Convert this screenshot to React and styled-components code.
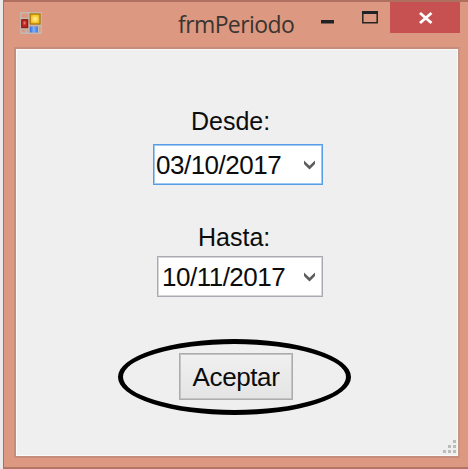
import React from "react";
import styled, { createGlobalStyle } from "styled-components";

const GlobalStyle = createGlobalStyle`
  * { box-sizing: border-box; }
  body { margin: 0; background: #ebe9e9; overflow: hidden; }
`;

const Window = styled.main`
  width: 465px;
  height: 469px;
  margin-left: 3px;
  padding: 0 8px 11px 11px;
  background: #dc9880;
  border-top: 2px solid #b0705f;
  border-left: 1px solid #a8705f;
  border-bottom: 2px solid #b27563;
  font-family: "Liberation Sans", Arial, sans-serif;
  color: #0c0c0c;
`;

const TitleBar = styled.header`
  height: 45px;
  display: flex;
  align-items: flex-start;
`;

const AppIcon = styled.svg`
  display: block;
  margin: 10px 0 0 5px;
`;

const Title = styled.h1`
  flex: 1;
  margin: 7px 0 0 136px;
  font: 400 23px/30px "Open Sans", "Noto Sans", sans-serif;
  letter-spacing: -0.6px;
  color: #3a3431;
  white-space: nowrap;
`;

const CaptionButtons = styled.div`
  display: flex;
`;

const CaptionButton = styled.button`
  width: ${(p) => p.$width}px;
  height: 31px;
  padding: 0;
  border: 0;
  background: ${(p) => (p.$danger ? "#c75050" : "transparent")};
  svg { display: block; }
`;

const Client = styled.section`
  width: 446px;
  height: 411px;
  margin-left: -1px;
  padding-top: 57px;
  border: 2px solid #c58d7c;
  border-right-color: #c79786;
  box-shadow: inset 1px 1px #fafafa, inset -1px -1px #fafafa;
  background: #efefef;
  position: relative;
`;

const Field = styled.div`
  width: ${(p) => p.$width}px;
  margin-left: ${(p) => p.$left}px;
  margin-bottom: ${(p) => p.$gap}px;
`;

const Label = styled.label`
  display: block;
  height: ${(p) => p.$height}px;
  padding-left: ${(p) => p.$indent}px;
  font-size: 25px;
  line-height: 30px;
`;

const DateBox = styled.div`
  height: 41px;
  display: flex;
  align-items: center;
  justify-content: space-between;
  padding: 0 6px 0 ${(p) => p.$pad}px;
  border: 1px solid ${(p) => (p.$focused ? "#569de5" : "#aaabb2")};
  box-shadow: inset 0 0 0 1px ${(p) => (p.$focused ? "#9fc9f2" : "#d4d5d9")};
  background: #fff;
  font-size: 26px;
  line-height: 30px;
  letter-spacing: -0.5px;
`;

const AcceptButton = styled.button`
  display: block;
  width: 114px;
  height: 47px;
  margin-left: 163px;
  padding: 1px 0 0;
  border: 1px solid #acacac;
  box-shadow: inset 0 0 0 1px #c4c4c4;
  background: linear-gradient(#f0f0f0, #e4e4e4);
  font: 26px/30px "Liberation Sans", Arial, sans-serif;
  letter-spacing: -0.4px;
  color: #0c0c0c;
`;

const Highlight = styled.div`
  position: absolute;
  left: 102px;
  top: 290px;
  width: 233px;
  height: 76px;
  border: 5px solid #000;
  border-radius: 50%;
  pointer-events: none;
`;

const Grip = styled.svg`
  position: absolute;
  right: 1px;
  bottom: 2px;
`;

const Chevron = () => (
  <svg width="13" height="12" viewBox="0 0 13 12">
    <path d="M1 1.5 L6.5 6.7 L12 1.5 V5 L6.5 10.5 L1 5Z" fill="#5c5c5c" />
  </svg>
);

const DateField = ({ label, value, width, left, gap, indent, labelHeight, pad, focused }) => (
  <Field $width={width} $left={left} $gap={gap}>
    <Label $indent={indent} $height={labelHeight}>{label}</Label>
    <DateBox $focused={focused} $pad={pad}>
      <span>{value}</span>
      <Chevron />
    </DateBox>
  </Field>
);

export default function App() {
  return (
    <>
      <GlobalStyle />
      <Window>
        <TitleBar>
          <AppIcon width="22" height="22" viewBox="0 0 22 22">
            <defs>
              <radialGradient id="gold"><stop stopColor="#fff3a0" /><stop offset="1" stopColor="#f3b90f" /></radialGradient>
              <linearGradient id="blue"><stop stopColor="#3269cf" /><stop offset=".5" stopColor="#7cb2fa" /><stop offset="1" stopColor="#3c72d8" /></linearGradient>
            </defs>
            <path d="M.8 .8H21.2V21.2H.8ZM.8 6.5H9M.8 16.7H9M6.2 17V21M9 1V21M18.5 13V21M9 13.3H21" fill="none" stroke="#c4b9b1" strokeWidth="1.4" />
            <rect x="1.7" y="7.7" width="6" height="8" fill="#b92720" stroke="#87150f" />
            <rect x="3.5" y="9.5" width="2" height="3" fill="#e77b6d" />
            <rect x="10.2" y="2" width="9.8" height="10" fill="url(#gold)" stroke="#a77b05" strokeWidth="1.2" />
            <rect x="9.8" y="14.5" width="8" height="6" fill="url(#blue)" />
          </AppIcon>
          <Title>frmPeriodo</Title>
          <CaptionButtons>
            <CaptionButton $width={40} aria-label="Minimizar">
              <svg width="40" height="31"><rect x="10" y="18" width="13" height="3.5" fill="#202326" /></svg>
            </CaptionButton>
            <CaptionButton $width={39} aria-label="Maximizar">
              <svg width="39" height="31"><path d="M11.8 10V20.8H26.2V10Z" fill="none" stroke="#252423" strokeWidth="1.5" /><rect x="11" y="9" width="16" height="3" fill="#202326" /></svg>
            </CaptionButton>
            <CaptionButton $width={70} $danger aria-label="Cerrar">
              <svg width="70" height="31"><path d="M30 11L41.5 21M41.5 11L30 21" stroke="#fff" strokeWidth="2.8" /></svg>
            </CaptionButton>
          </CaptionButtons>
        </TitleBar>
        <Client>
          <DateField label="Desde:" value="03/10/2017" width={170} left={137} gap={37} indent={38} labelHeight={38} pad={2} focused />
          <DateField label="Hasta:" value="10/11/2017" width={166} left={141} gap={56} indent={41} labelHeight={34} pad={4} />
          <AcceptButton>Aceptar</AcceptButton>
          <Highlight />
          <Grip width="14" height="14" viewBox="0 0 14 14" fill="#bcbcbc">
            <path d="M10 0h3v3h-3zM5 5h3v3H5zM10 5h3v3h-3zM0 10h3v3H0zM5 10h3v3H5zM10 10h3v3h-3z" />
          </Grip>
        </Client>
      </Window>
    </>
  );
}
